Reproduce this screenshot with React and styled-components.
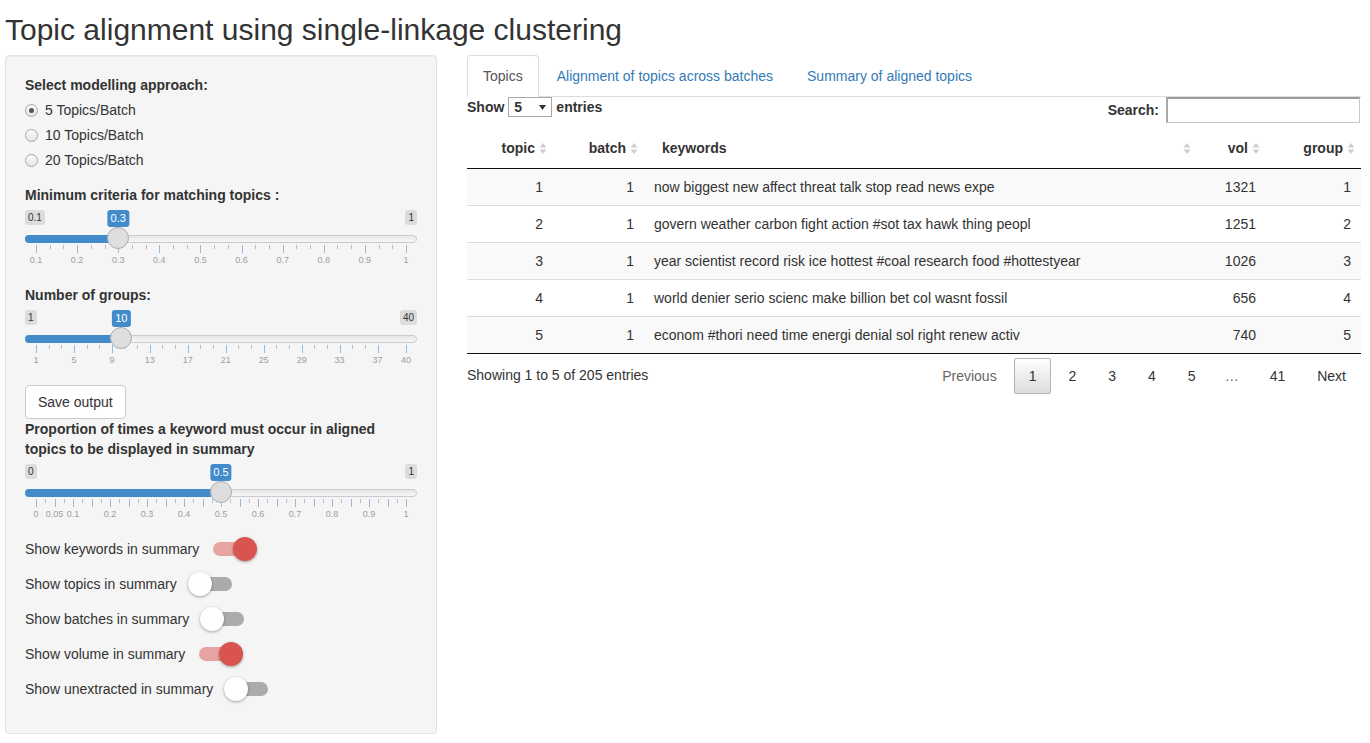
import React from "react";
import styled, { createGlobalStyle } from "styled-components";

const GlobalStyle = createGlobalStyle`
  html, body { margin: 0; padding: 0; background: #fff; }
  body {
    font-family: "Liberation Sans", Arial, Helvetica, sans-serif;
    font-size: 14px;
    line-height: 20px;
    color: #333;
  }
  *, *::before, *::after { box-sizing: border-box; }
`;

const Page = styled.div`
  padding: 0 9px 0 5px;
`;

const Title = styled.h2`
  margin: 13px 0 9px;
  font-size: 30px;
  font-weight: 500;
  line-height: 33px;
  color: #333;
`;

const Layout = styled.div`
  display: flex;
  align-items: flex-start;
  gap: 30px;
`;

const Well = styled.div`
  width: 432px;
  flex: none;
  padding: 19px;
  background: #f5f5f5;
  border: 1px solid #e3e3e3;
  border-radius: 4px;
  box-shadow: inset 0 1px 1px rgba(0, 0, 0, 0.05);
`;

const FormGroup = styled.div`
  margin-bottom: ${(p) => (p.$mb ?? 15)}px;
`;

const ControlLabel = styled.div`
  font-weight: 700;
  margin-bottom: 5px;
`;

const RadioList = styled.div`
  display: flex;
  flex-direction: column;
  gap: 5px;
`;

const RadioRow = styled.label`
  display: flex;
  align-items: center;
  gap: 7px;
  height: 20px;
`;

const RadioCircle = styled.span`
  width: 13px;
  height: 13px;
  flex: none;
  display: flex;
  align-items: center;
  justify-content: center;
  border-radius: 50%;
  border: 1px solid #a6a6a6;
  background: linear-gradient(#fcfcfc, #e4e4e4);
`;

const RadioDot = styled.span`
  width: 5px;
  height: 5px;
  border-radius: 50%;
  background: #555;
`;

/* ---------- slider (ion.rangeSlider, shiny skin) ---------- */

const SliderBox = styled.div`
  position: relative;
  height: 60px;
`;

const SliderLine = styled.div`
  position: absolute;
  top: 25px;
  left: 0;
  right: 0;
  height: 8px;
  border: 1px solid #cccccc;
  border-radius: 8px;
  background: linear-gradient(to bottom, #dedede -50%, #ffffff 150%);
`;

const SliderBar = styled.div`
  position: absolute;
  top: 25px;
  left: 0;
  height: 8px;
  background: #428bca;
  border-radius: 8px 0 0 8px;
`;

const SliderHandle = styled.div`
  position: absolute;
  top: 17px;
  width: 22px;
  height: 22px;
  margin-left: -11px;
  border: 1px solid #ababab;
  background: #dedede;
  border-radius: 50%;
  box-shadow: 1px 1px 3px rgba(255, 255, 255, 0.3);
`;

const MinMax = styled.span`
  position: absolute;
  top: 0;
  ${(p) => (p.$right ? "right: 0;" : "left: 0;")}
  padding: 1px 3px;
  font-size: 10px;
  line-height: 1.333;
  color: #333;
  background: rgba(0, 0, 0, 0.1);
  border-radius: 3px;
`;

const SingleLabel = styled.span`
  position: absolute;
  top: 0;
  transform: translateX(-50%);
  padding: 1px 3px;
  font-size: 11px;
  line-height: 1.333;
  color: #fff;
  background: #428bca;
  border-radius: 3px;
  white-space: nowrap;
`;

const Grid = styled.div`
  position: absolute;
  left: 11px;
  right: 11px;
  bottom: 0;
  height: 25px;
`;

const GridPol = styled.span`
  position: absolute;
  top: 0;
  width: 1px;
  height: ${(p) => (p.$small ? 4 : 8)}px;
  background: ${(p) => (p.$small ? "#b5bfc8" : "#94b9de")};
`;

const GridText = styled.span`
  position: absolute;
  bottom: 5px;
  transform: translateX(-50%);
  font-size: 9px;
  line-height: 9px;
  color: #999fa5;
  white-space: nowrap;
`;

function fmt(v) {
  return String(Math.round(v * 1000) / 1000);
}

function buildGrid(min, max, bigs, smallFor, labelVals) {
  const pos = (v) => (v - min) / (max - min);
  const ticks = [];
  bigs.forEach((b, i) => {
    ticks.push({ p: pos(b), small: false });
    if (i > 0) {
      const n = smallFor(i, bigs.length - 1);
      const a = bigs[i - 1];
      for (let z = 1; z <= n; z++) {
        ticks.push({ p: pos(a + ((b - a) * z) / (n + 1)), small: true });
      }
    }
  });
  const labels = (labelVals || bigs).map((v) => ({ p: pos(v), text: fmt(v) }));
  return { ticks, labels };
}

function Slider({ min, max, value, grid }) {
  const p = (value - min) / (max - min);
  const px = `calc(11px + (100% - 22px) * ${p})`;
  return (
    <SliderBox>
      <MinMax>{fmt(min)}</MinMax>
      <MinMax $right>{fmt(max)}</MinMax>
      <SingleLabel style={{ left: px }}>{fmt(value)}</SingleLabel>
      <SliderLine />
      <SliderBar style={{ width: px }} />
      <Grid>
        {grid.ticks.map((t, i) => (
          <GridPol key={i} $small={t.small} style={{ left: `${t.p * 100}%` }} />
        ))}
        {grid.labels.map((l, i) => (
          <GridText key={i} style={{ left: `${l.p * 100}%` }}>
            {l.text}
          </GridText>
        ))}
      </Grid>
      <SliderHandle style={{ left: px }} />
    </SliderBox>
  );
}

const range = (a, b, s) => {
  const out = [];
  for (let v = a; v <= b + 1e-9; v += s) out.push(Math.round(v * 1000) / 1000);
  return out;
};

const grid1 = buildGrid(0.1, 1, range(0.1, 1, 0.1), () => 2);
const grid2 = buildGrid(1, 40, [...range(1, 37, 4), 40], (i, last) => (i === last ? 0 : 2));
const grid3 = buildGrid(0, 1, range(0, 1, 0.05), () => 1, [0, 0.05, ...range(0.1, 1, 0.1)]);

/* ---------- button & switches ---------- */

const Button = styled.button`
  display: block;
  font: inherit;
  line-height: 20px;
  padding: 6px 12px;
  color: #333;
  background: #fff;
  border: 1px solid #ccc;
  border-radius: 4px;
`;

const ToggleRow = styled.div`
  display: flex;
  align-items: center;
  height: 20px;
  margin-bottom: 15px;
`;

const Switch = styled.span`
  position: relative;
  display: flex;
  align-items: center;
  justify-content: ${(p) => (p.$on ? "flex-end" : "flex-start")};
  width: 44px;
  height: 24px;
  margin-left: ${(p) => (p.$on ? 14 : 11)}px;
  flex: none;
  &::before {
    content: "";
    position: absolute;
    left: 0;
    right: 0;
    top: 5px;
    height: 14px;
    border-radius: 7px;
    background: ${(p) => (p.$on ? "rgba(217, 83, 79, 0.5)" : "#ababab")};
  }
`;

const Knob = styled.span`
  position: relative;
  width: 24px;
  height: 24px;
  border-radius: 50%;
  background: ${(p) => (p.$on ? "#d9534f" : "#fff")};
  box-shadow: 0 1px 3px rgba(0, 0, 0, 0.35);
`;

/* ---------- main panel ---------- */

const Main = styled.div`
  flex: 1;
  min-width: 0;
`;

const Tabs = styled.ul`
  display: flex;
  list-style: none;
  margin: 0;
  padding: 0;
  border-bottom: 1px solid #ddd;
`;

const Tab = styled.li`
  margin: 0 2px -1px 0;
  padding: 10px 15px;
  line-height: 20px;
  border: 1px solid ${(p) => (p.$active ? "#ddd" : "transparent")};
  border-bottom-color: transparent;
  border-radius: 4px 4px 0 0;
  background: ${(p) => (p.$active ? "#fff" : "transparent")};
  color: ${(p) => (p.$active ? "#555" : "#337ab7")};
`;

const Controls = styled.div`
  display: flex;
  justify-content: space-between;
  align-items: flex-start;
`;

const LengthLabel = styled.div`
  display: flex;
  align-items: center;
  gap: 4px;
  font-weight: 700;
  line-height: 20px;
`;

const SelectBox = styled.div`
  display: flex;
  align-items: center;
  justify-content: space-between;
  width: 44px;
  height: 20px;
  padding: 0 5px 0 5px;
  border: 1px solid #a9a9a9;
  background: #fff;
  font-weight: 700;
`;

const FilterLabel = styled.div`
  display: flex;
  align-items: center;
  font-weight: 700;
  margin-right: 1px;
`;

const SearchInput = styled.div`
  width: 194px;
  height: 26px;
  margin-left: 7px;
  background: #fff;
  border: 1px solid #c6c6c6;
  border-top: 2px solid #9a9a9a;
  border-left: 2px solid #a9a9a9;
`;

const Table = styled.table`
  width: 100%;
  table-layout: fixed;
  border-collapse: separate;
  border-spacing: 0;
  margin-top: 5px;
  border-bottom: 1px solid #111;
`;

const Th = styled.th`
  padding: 10px 6px 10px 18px;
  font-weight: 700;
  line-height: 20px;
  border-bottom: 1px solid #111;
`;

const ThInner = styled.div`
  display: flex;
  align-items: center;
  justify-content: ${(p) => (p.$left ? "space-between" : "flex-end")};
  gap: 4px;
`;

const Tr = styled.tr`
  background: ${(p) => (p.$odd ? "#f9f9f9" : "#fff")};
`;

const Td = styled.td`
  padding: 8px 10px;
  line-height: 20px;
  text-align: ${(p) => (p.$left ? "left" : "right")};
  border-top: ${(p) => (p.$first ? "none" : "1px solid #ddd")};
  white-space: nowrap;
  overflow: hidden;
`;

const Footer = styled.div`
  display: flex;
  justify-content: space-between;
  align-items: flex-start;
`;

const Info = styled.div`
  padding-top: 0.755em;
`;

const Pager = styled.div`
  display: flex;
  align-items: flex-start;
  padding-top: 0.25em;
`;

const PageBtn = styled.span`
  min-width: 1.5em;
  margin-left: 2px;
  padding: 0.5em 1em;
  line-height: 20px;
  text-align: center;
  border-radius: 2px;
  border: 1px solid ${(p) => (p.$current ? "#b3b3b3" : "transparent")};
  background: ${(p) => (p.$current ? "linear-gradient(to bottom, #fff 0%, #dcdcdc 100%)" : "transparent")};
  color: ${(p) => (p.$disabled ? "#666" : "#333")};
`;

const Ellipsis = styled.span`
  padding: calc(0.5em + 1px) 1em;
  line-height: 20px;
  color: #555;
`;

function SortIcon() {
  return (
    <svg width="8" height="13" viewBox="0 0 8 13" aria-hidden="true">
      <path d="M0.5 5.5 L4 1 L7.5 5.5 Z" fill="#cfcfcf" />
      <path d="M0.5 7.5 L4 12 L7.5 7.5 Z" fill="#cfcfcf" />
    </svg>
  );
}

function Caret() {
  return (
    <svg width="7" height="5" viewBox="0 0 7 5" aria-hidden="true">
      <path d="M0 0 L7 0 L3.5 5 Z" fill="#333" />
    </svg>
  );
}

const columns = [
  { key: "topic", label: "topic", width: 86 },
  { key: "batch", label: "batch", width: 91 },
  { key: "keywords", label: "keywords", width: 553, left: true },
  { key: "vol", label: "vol", width: 69 },
  { key: "group", label: "group", width: 95 },
];

const rows = [
  { topic: 1, batch: 1, keywords: "now biggest new affect threat talk stop read news expe", vol: 1321, group: 1 },
  { topic: 2, batch: 1, keywords: "govern weather carbon fight action #sot tax hawk thing peopl", vol: 1251, group: 2 },
  { topic: 3, batch: 1, keywords: "year scientist record risk ice hottest #coal research food #hottestyear", vol: 1026, group: 3 },
  { topic: 4, batch: 1, keywords: "world denier serio scienc make billion bet col wasnt fossil", vol: 656, group: 4 },
  { topic: 5, batch: 1, keywords: "econom #thori need time energi denial sol right renew activ", vol: 740, group: 5 },
];

const toggles = [
  { label: "Show keywords in summary", on: true },
  { label: "Show topics in summary", on: false },
  { label: "Show batches in summary", on: false },
  { label: "Show volume in summary", on: true },
  { label: "Show unextracted in summary", on: false },
];

export default function App() {
  return (
    <Page>
      <GlobalStyle />
      <Title>Topic alignment using single-linkage clustering</Title>
      <Layout>
        <Well>
          <FormGroup>
            <ControlLabel>Select modelling approach:</ControlLabel>
            <RadioList>
              {["5 Topics/Batch", "10 Topics/Batch", "20 Topics/Batch"].map((t, i) => (
                <RadioRow key={t}>
                  <RadioCircle>{i === 0 && <RadioDot />}</RadioCircle>
                  {t}
                </RadioRow>
              ))}
            </RadioList>
          </FormGroup>
          <FormGroup>
            <ControlLabel>Minimum criteria for matching topics :</ControlLabel>
            <Slider min={0.1} max={1} value={0.3} grid={grid1} />
          </FormGroup>
          <FormGroup>
            <ControlLabel>Number of groups:</ControlLabel>
            <Slider min={1} max={40} value={10} grid={grid2} />
          </FormGroup>
          <Button type="button">Save output</Button>
          <FormGroup>
            <ControlLabel>
              Proportion of times a keyword must occur in aligned topics to be displayed in summary
            </ControlLabel>
            <Slider min={0} max={1} value={0.5} grid={grid3} />
          </FormGroup>
          {toggles.map((t) => (
            <ToggleRow key={t.label}>
              {t.label}
              <Switch $on={t.on}>
                <Knob $on={t.on} />
              </Switch>
            </ToggleRow>
          ))}
        </Well>
        <Main>
          <Tabs>
            <Tab $active>Topics</Tab>
            <Tab>Alignment of topics across batches</Tab>
            <Tab>Summary of aligned topics</Tab>
          </Tabs>
          <Controls>
            <LengthLabel>
              Show
              <SelectBox>
                5
                <Caret />
              </SelectBox>
              entries
            </LengthLabel>
            <FilterLabel>
              Search:
              <SearchInput />
            </FilterLabel>
          </Controls>
          <Table>
            <colgroup>
              {columns.map((c) => (
                <col key={c.key} style={{ width: c.width }} />
              ))}
            </colgroup>
            <thead>
              <tr>
                {columns.map((c) => (
                  <Th key={c.key}>
                    <ThInner $left={c.left}>
                      <span>{c.label}</span>
                      <SortIcon />
                    </ThInner>
                  </Th>
                ))}
              </tr>
            </thead>
            <tbody>
              {rows.map((r, i) => (
                <Tr key={r.topic} $odd={i % 2 === 0}>
                  {columns.map((c) => (
                    <Td key={c.key} $left={c.left} $first={i === 0}>
                      {r[c.key]}
                    </Td>
                  ))}
                </Tr>
              ))}
            </tbody>
          </Table>
          <Footer>
            <Info>Showing 1 to 5 of 205 entries</Info>
            <Pager>
              <PageBtn $disabled>Previous</PageBtn>
              <PageBtn $current>1</PageBtn>
              <PageBtn>2</PageBtn>
              <PageBtn>3</PageBtn>
              <PageBtn>4</PageBtn>
              <PageBtn>5</PageBtn>
              <Ellipsis>…</Ellipsis>
              <PageBtn>41</PageBtn>
              <PageBtn>Next</PageBtn>
            </Pager>
          </Footer>
        </Main>
      </Layout>
    </Page>
  );
}
